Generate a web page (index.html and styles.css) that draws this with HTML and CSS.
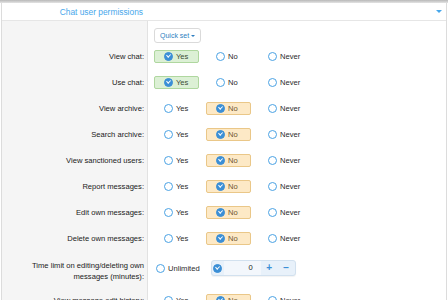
FILE: index.html
```html
<!DOCTYPE html>
<html>
<head>
  <meta charset="utf-8">
  <title>Chat user permissions</title>
  <link rel="stylesheet" href="styles.css">
</head>
<body>
  <div class="shade"></div>
  <section class="block">
    <h3 class="block-header">
      <span class="block-title">Chat user permissions</span>
      <span class="caret"></span>
    </h3>

    <div class="form">
      <div class="row row-quick">
        <div class="row-label"></div>
        <div class="row-input">
          <button class="quick">Quick set <span class="quick-caret"></span></button>
        </div>
      </div>

      <div class="row">
        <div class="row-label">View chat:</div>
        <div class="row-input">
          <label class="opt yes on"><span class="radio on"></span>Yes</label>
          <label class="opt"><span class="radio"></span>No</label>
          <label class="opt"><span class="radio"></span>Never</label>
        </div>
      </div>

      <div class="row">
        <div class="row-label">Use chat:</div>
        <div class="row-input">
          <label class="opt yes on"><span class="radio on"></span>Yes</label>
          <label class="opt"><span class="radio"></span>No</label>
          <label class="opt"><span class="radio"></span>Never</label>
        </div>
      </div>

      <div class="row">
        <div class="row-label">View archive:</div>
        <div class="row-input">
          <label class="opt"><span class="radio"></span>Yes</label>
          <label class="opt no on"><span class="radio on"></span>No</label>
          <label class="opt"><span class="radio"></span>Never</label>
        </div>
      </div>

      <div class="row">
        <div class="row-label">Search archive:</div>
        <div class="row-input">
          <label class="opt"><span class="radio"></span>Yes</label>
          <label class="opt no on"><span class="radio on"></span>No</label>
          <label class="opt"><span class="radio"></span>Never</label>
        </div>
      </div>

      <div class="row">
        <div class="row-label">View sanctioned users:</div>
        <div class="row-input">
          <label class="opt"><span class="radio"></span>Yes</label>
          <label class="opt no on"><span class="radio on"></span>No</label>
          <label class="opt"><span class="radio"></span>Never</label>
        </div>
      </div>

      <div class="row">
        <div class="row-label">Report messages:</div>
        <div class="row-input">
          <label class="opt"><span class="radio"></span>Yes</label>
          <label class="opt no on"><span class="radio on"></span>No</label>
          <label class="opt"><span class="radio"></span>Never</label>
        </div>
      </div>

      <div class="row">
        <div class="row-label">Edit own messages:</div>
        <div class="row-input">
          <label class="opt"><span class="radio"></span>Yes</label>
          <label class="opt no on"><span class="radio on"></span>No</label>
          <label class="opt"><span class="radio"></span>Never</label>
        </div>
      </div>

      <div class="row">
        <div class="row-label">Delete own messages:</div>
        <div class="row-input">
          <label class="opt"><span class="radio"></span>Yes</label>
          <label class="opt no on"><span class="radio on"></span>No</label>
          <label class="opt"><span class="radio"></span>Never</label>
        </div>
      </div>

      <div class="row row-time">
        <div class="row-label">Time limit on editing/deleting own<br>messages (minutes):</div>
        <div class="row-input">
          <label class="opt plain"><span class="radio"></span>Unlimited</label>
          <div class="spin">
            <span class="spin-check"><span class="radio on"></span></span>
            <span class="spin-value">0</span>
            <span class="spin-btn">+</span>
            <span class="spin-btn">&minus;</span>
          </div>
        </div>
      </div>

      <div class="row">
        <div class="row-label">View message edit history:</div>
        <div class="row-input">
          <label class="opt"><span class="radio"></span>Yes</label>
          <label class="opt no on"><span class="radio on"></span>No</label>
          <label class="opt"><span class="radio"></span>Never</label>
        </div>
      </div>
    </div>
  </section>
</body>
</html>
```

FILE: styles.css
```css
body {
  margin: 0;
  height: 300px;
  overflow: hidden;
  background: #fff;
  font-family: "Liberation Sans", Arial, sans-serif;
}

.shade {
  height: 3px;
  background: linear-gradient(#b8b8b8, #e4e4e4);
}

.block {
  margin: 0 1px;
  border-left: 1px solid #dcdcdc;
  border-right: 1px solid #dcdcdc;
}

.block-header {
  margin: 0;
  height: 17px;
  display: flex;
  align-items: center;
  border-bottom: 1px solid #e6e6e6;
  font-size: 8.4px;
  font-weight: normal;
  color: #47a7eb;
}

.block-title {
  width: 141px;
  text-align: right;
}

.caret {
  margin-left: auto;
  margin-right: 4px;
  border-left: 3px solid transparent;
  border-right: 3px solid transparent;
  border-top: 3px solid #47a7eb;
}

.form {
  background: linear-gradient(to right, #f5f5f5 145px, #e2e2e2 145px, #e2e2e2 146px, #fff 146px);
}

.row {
  display: flex;
  align-items: center;
  height: 26px;
}

.row-label {
  width: 146px;
  flex: none;
  box-sizing: border-box;
  padding-right: 4px;
  text-align: right;
  font-size: 7.6px;
  line-height: 11px;
  color: #1a1a1a;
}

.row-input {
  display: flex;
  align-items: center;
  gap: 7px;
  padding-left: 6px;
}

.row-quick {
  height: 22px;
  align-items: flex-end;
}

.quick {
  height: 15px;
  padding: 0 5px;
  border: 1px solid #dadada;
  border-radius: 3px;
  background: #fff;
  font-family: inherit;
  font-size: 7px;
  color: #2f7fc1;
  display: flex;
  align-items: center;
  gap: 2px;
}

.quick-caret {
  border-left: 2px solid transparent;
  border-right: 2px solid transparent;
  border-top: 2px solid #2f7fc1;
}

.opt {
  box-sizing: border-box;
  min-width: 45px;
  height: 13px;
  padding: 0 4px 0 9px;
  display: flex;
  align-items: center;
  gap: 3px;
  border: 1px solid transparent;
  border-radius: 2px;
  font-size: 7.6px;
  color: #2a2a2a;
}

.opt.yes.on {
  background: #dcf0d5;
  border-color: #afd79f;
  color: #3b4a35;
}

.opt.no.on {
  background: #fde9c6;
  border-color: #eac788;
  color: #6d5630;
}

.opt.plain {
  padding: 0 0 0 1px;
  min-width: 0;
}

.radio {
  position: relative;
  box-sizing: border-box;
  width: 9px;
  height: 9px;
  flex: none;
  border: 1.3px solid #4aa2e4;
  border-radius: 50%;
  background: #fff;
}

.radio.on {
  background: #3b8fd6;
  border-color: #3b8fd6;
}

.radio.on::after {
  content: '';
  position: absolute;
  left: 2.2px;
  top: 0.6px;
  width: 1.6px;
  height: 3.4px;
  border-right: 1.2px solid #fff;
  border-bottom: 1.2px solid #fff;
  transform: rotate(45deg);
}

.row-time {
  height: 36px;
  align-items: flex-start;
}

.row-time .row-label {
  padding-top: 9px;
}

.row-time .row-input {
  padding-top: 9px;
  gap: 10px;
}

.spin {
  display: flex;
  height: 16px;
  box-sizing: border-box;
  border: 1px solid #d2e1ef;
  border-radius: 3px;
  background: #e8f1fa;
  box-shadow: 0 1px 1px rgba(0, 0, 0, 0.05);
  font-size: 7.6px;
}

.spin-check {
  width: 12px;
  display: flex;
  align-items: center;
  justify-content: center;
}

.spin-value {
  width: 37px;
  box-sizing: border-box;
  padding-right: 8px;
  background: #f3f7fc;
  text-align: right;
  line-height: 14px;
  color: #222;
}

.spin-btn {
  width: 17px;
  text-align: center;
  line-height: 14px;
  font-size: 10px;
  font-weight: bold;
  color: #3b8fd6;
}
```
